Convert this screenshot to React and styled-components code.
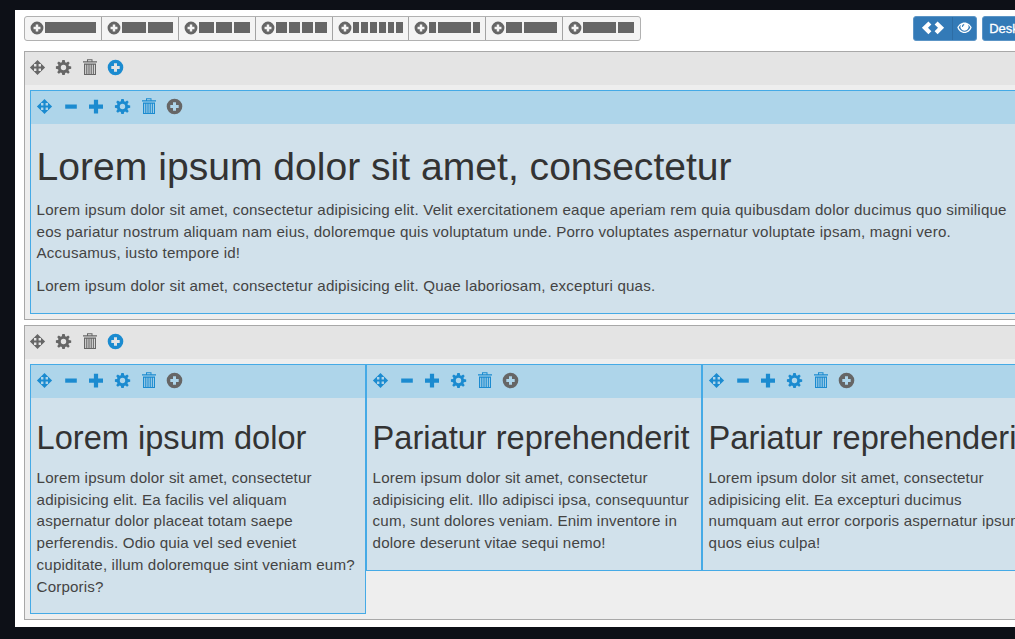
import React from 'react';
import styled, { createGlobalStyle } from 'styled-components';

const Global = createGlobalStyle`
  * { box-sizing: border-box; }
  body { margin: 0; background: #0d1017; overflow: hidden; font-family: "Liberation Sans", Arial, sans-serif; }
  h1, h2, p { margin: 0; font-weight: 400; }
`;

const Frame = styled.div`
  width: 1015px;
  height: 639px;
  padding: 10px 0 12px 15px;
  background: #0d1017;
  overflow: hidden;
`;

const Page = styled.main`
  height: 617px;
  padding: 6px 0 0 9px;
  background: #fff;
  overflow: hidden;
`;

const Toolbar = styled.header`
  display: flex;
  height: 25px;
  margin-bottom: 10px;
`;

const LayoutGroup = styled.div`
  display: flex;
  flex: none;
  width: 617px;
  border: 1px solid #b1b1b1;
  border-radius: 3px;
  background: #f4f4f4;
`;

const LayoutButton = styled.button`
  flex: 1;
  display: flex;
  align-items: center;
  gap: 1px;
  height: 23px;
  padding: 0 5px 2px;
  border: 0;
  border-right: 1px solid #a3a3a3;
  background: none;
  &:last-child { border-right: 0; padding-right: 6px; }
`;

const Bars = styled.span`
  flex: 1;
  display: grid;
  grid-template-columns: ${p => p.$cols};
  gap: 2px;
  height: 11px;
`;

const Bar = styled.i`
  background: #666;
`;

const ActionGroup = styled.div`
  display: flex;
  flex: none;
  height: 25px;
  margin-left: ${p => p.$gap};
  border: 1px solid #5c95c6;
  border-radius: 3px;
  background: #337ab7;
`;

const ActionButton = styled.button`
  display: flex;
  align-items: center;
  justify-content: center;
  width: ${p => p.$width};
  padding: 0 0 1px;
  border: 0;
  background: none;
  color: #fff;
  font: 13px "Liberation Sans", Arial, sans-serif;
  -webkit-text-stroke: 0.3px #fff;
  & + & { border-left: 1px solid #2e6da4; }
`;

const Row = styled.section`
  width: 1100px;
  height: ${p => p.$height};
  margin-bottom: 5px;
  border: 1px solid #a8a8a8;
  background: #eee;
`;

const RowTools = styled.div`
  display: flex;
  align-items: center;
  height: 33px;
  padding: 0 0 2px 4px;
  gap: 9px;
  background: #e4e4e4;
  color: #666;
`;

const Columns = styled.div`
  display: flex;
  align-items: flex-start;
  padding: 5px 5px 0;
`;

const Column = styled.article`
  flex: none;
  width: ${p => p.$width};
  height: ${p => p.$height};
  border: 1px solid #45aae6;
  background: #d1e1eb;
`;

const ColumnTools = styled.div`
  display: flex;
  align-items: center;
  height: 33px;
  padding: 0 0 2px 5px;
  gap: 9px;
  background: #aed5ea;
  color: #1b8bd0;
`;

const Copy = styled.div`
  padding: 0 6px 0 5.6px;
  color: #444;
  white-space: nowrap;
`;

const Title = styled.h1`
  padding-top: ${p => p.$top};
  margin-bottom: ${p => p.$bottom};
  font-size: ${p => p.$size};
  line-height: 44px;
  color: #333;
`;

const Paragraph = styled.p`
  font-size: 15.15px;
  line-height: 21.7px;
  letter-spacing: ${p => p.$track || '0.18px'};
  margin-bottom: 11px;
`;

const Line = styled.span`
  display: block;
`;

const Svg = styled.svg`
  flex: none;
  width: ${p => p.$w || 17}px;
  height: ${p => p.$h || 17}px;
  fill: currentColor;
  color: ${p => p.$color || 'inherit'};
`;

const Move = () => (
  <Svg viewBox="0 0 17 17"><path d="M8.500.9 12.400 5H9.600v2.400H12V4.600l4.100 3.900L12 12.400V9.600H9.600V12h2.800l-3.900 4.100L4.600 12h2.800V9.600H5v2.800L.9 8.500 5 4.600v2.800h2.400V5H4.600z" /></Svg>
);
const Minus = () => <Svg viewBox="0 0 17 17"><path d="M3.200 6.500h11.600v4.200H3.200z" /></Svg>;
const Plus = () => <Svg viewBox="0 0 17 17"><path d="M5.900 1.700h4.200v4.800H15v4.200h-4.900v4.800H5.900v-4.800H1V6.500h4.900z" /></Svg>;
const Cog = () => (
  <Svg viewBox="0 0 17 17">
    <path fillRule="evenodd" d="M7.3 1h2.4l.5 2.300 1 .5 2-1.300 1.500 1.500-1.300 2 .5 1 2.300.4v2.400l-2.300.5-.5 1 1.300 2-1.500 1.500-2-1.300-1 .5-.5 2.100H7.300l-.5-2.200-1-.5-2 1.300-1.600-1.500 1.300-2-.5-1L.9 9.700V7.300L3 6.900l.5-1-1.300-2 1.600-1.500 2 1.300 1-.5zM8.500 5.800a2.700 2.700 0 1 0 0 5.400 2.700 2.700 0 0 0 0-5.400z" />
  </Svg>
);
const Trash = () => (
  <Svg viewBox="0 0 17 17">
    <path fillRule="evenodd" d="M6 2.200V.3h5.500v1.900H16v1.200H2V2.200zM7 2.200h3.500V1.200H7zM3 4.600h12V16H3zM4.200 5.700v9.200h1V5.700zm2.200 0v9.200h1V5.700zm2.200 0v9.200h1V5.700zm2.200 0v9.200h1V5.700zm2.100 0v9.200h1V5.700z" />
  </Svg>
);
const Add = ({ size = 17, color }) => (
  <Svg viewBox="0 0 17 17" $w={size} $h={size} $color={color}>
    <path fillRule="evenodd" d="M8.5.7a7.8 7.8 0 1 0 0 15.6 7.8 7.8 0 0 0 0-15.6zM7 4.300h3v2.700h2.700v3H10v2.700H7V10H4.300V7H7z" />
  </Svg>
);
const Code = () => (
  <Svg viewBox="0 0 24 14" $w={24} $h={14}><path d="M7.400.4 10.400 3.400 7 6.800l3.400 3.400-3 3L.9 6.800zM16.600.4 13.600 3.400 17 6.800l-3.400 3.400 3 3 6.500-6.400z" /></Svg>
);
const Eye = () => (
  <Svg viewBox="0 0 15 12" $w={15} $h={12}>
    <path fillRule="evenodd" d="M7.5.5C4 .5 1.500 3 .3 5.500 1.500 8.500 4 11 7.500 11s6-2.500 7.200-5.500C13.500 3 11 .5 7.500.5zM1.700 5.500c.5-1.200 1.200-2.100 2.200-2.800a4.100 4.100 0 1 0 7.200 0c1 .7 1.700 1.600 2.200 2.800-1.200 2.700-3.500 4.200-5.800 4.200S2.900 8.200 1.700 5.500zM6.800 2a2.700 2.700 0 0 0-1.900 2.800l1.100.1c0-1 .6-1.700 1.500-1.900z" />
  </Svg>
);

const layouts = [[12], [6, 6], [4, 4, 4], [3, 3, 3, 3], [2, 2, 2, 2, 2, 2], [2, 8, 2], [4, 8], [8, 4]];
const track = n => `minmax(0, calc(${(n / 12) * 100}% - ${(2 * (12 - n)) / 12}px))`;

const Tools = () => (
  <ColumnTools><Move /><Minus /><Plus /><Cog /><Trash /><Add color="#666" /></ColumnTools>
);

const RowHeader = () => (
  <RowTools><Move /><Cog /><Trash /><Add color="#1b8bd0" /></RowTools>
);

const cards = [
  { title: 'Lorem ipsum dolor', height: '250px', lines: ['Lorem ipsum dolor sit amet, consectetur', 'adipisicing elit. Ea facilis vel aliquam', 'aspernatur dolor placeat totam saepe', 'perferendis. Odio quia vel sed eveniet', 'cupiditate, illum doloremque sint veniam eum?', 'Corporis?'] },
  { title: 'Pariatur reprehenderit', height: '207px', lines: ['Lorem ipsum dolor sit amet, consectetur', 'adipisicing elit. Illo adipisci ipsa, consequuntur', 'cum, sunt dolores veniam. Enim inventore in', 'dolore deserunt vitae sequi nemo!'] },
  { title: 'Pariatur reprehenderit', height: '207px', lines: ['Lorem ipsum dolor sit amet, consectetur', 'adipisicing elit. Ea excepturi ducimus', 'numquam aut error corporis aspernatur ipsum', 'quos eius culpa!'] },
];

const intro = [
  'Lorem ipsum dolor sit amet, consectetur adipisicing elit. Velit exercitationem eaque aperiam rem quia quibusdam dolor ducimus quo similique',
  'eos pariatur nostrum aliquam nam eius, doloremque quis voluptatum unde. Porro voluptates aspernatur voluptate ipsam, magni vero.',
  'Accusamus, iusto tempore id!',
];

export default function App() {
  return (
    <Frame>
      <Global />
      <Page>
        <Toolbar>
          <LayoutGroup>
            {layouts.map((cols, i) => (
              <LayoutButton key={i}>
                <Add size={14} color="#666" />
                <Bars $cols={cols.map(track).join(' ')}>{cols.map((_, j) => <Bar key={j} />)}</Bars>
              </LayoutButton>
            ))}
          </LayoutGroup>
          <ActionGroup $gap="272px">
            <ActionButton $width="38px"><Code /></ActionButton>
            <ActionButton $width="24px"><Eye /></ActionButton>
          </ActionGroup>
          <ActionGroup $gap="5px">
            <ActionButton $width="60px">Desktop</ActionButton>
          </ActionGroup>
        </Toolbar>
        <Row $height="269px">
          <RowHeader />
          <Columns>
            <Column $width="1010px" $height="224px">
              <Tools />
              <Copy>
                <Title $top="21px" $bottom="10px" $size="39.1px">Lorem ipsum dolor sit amet, consectetur</Title>
                <Paragraph>{intro.map(l => <Line key={l}>{l}</Line>)}</Paragraph>
                <Paragraph><Line>Lorem ipsum dolor sit amet, consectetur adipisicing elit. Quae laboriosam, excepturi quas.</Line></Paragraph>
              </Copy>
            </Column>
          </Columns>
        </Row>
        <Row $height="295px">
          <RowHeader />
          <Columns>
            {cards.map((c, i) => (
              <Column key={i} $width="336px" $height={c.height}>
                <Tools />
                <Copy>
                  <Title as="h2" $top="18.400px" $bottom="6.600px" $size="32.6px">{c.title}</Title>
                  <Paragraph $track="0.15px">{c.lines.map(l => <Line key={l}>{l}</Line>)}</Paragraph>
                </Copy>
              </Column>
            ))}
          </Columns>
        </Row>
      </Page>
    </Frame>
  );
}
